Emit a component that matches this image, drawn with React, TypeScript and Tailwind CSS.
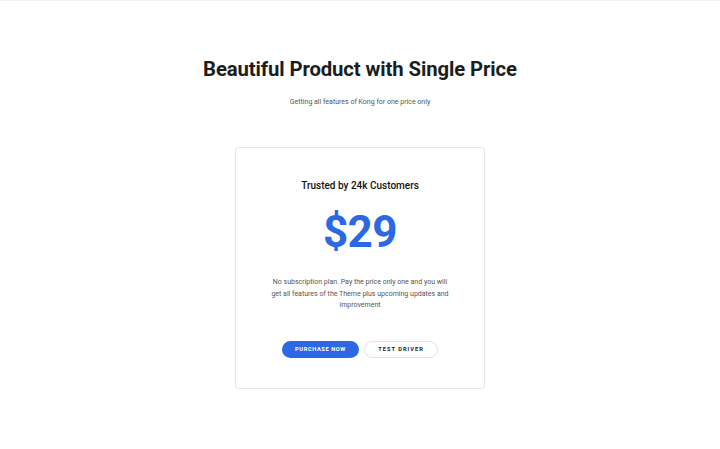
export default function App() {
  return (
    <div className="min-h-[449px] w-full bg-white font-['Roboto',sans-serif] text-[#222] border-t border-[#f2f2f2]">
      <div className="flex flex-col items-center pt-[54px]">
        <h1 className="text-[20.3px] leading-[28px] font-bold text-[#1d1d1d] tracking-[-0.1px]">
          Beautiful Product with Single Price
        </h1>
        <p className="mt-[14px] text-[7px] leading-[10px] text-[#555]">
          Getting all features of Kong for one price only
        </p>
        <div className="mt-[40px] w-[250px] h-[242px] border border-[#e6e6e6] rounded-[3px] flex flex-col items-center pt-[31px]">
          <div className="text-[10px] leading-[14px] font-medium text-[#111]">
            Trusted by 24k Customers
          </div>
          <div className="mt-[16px] text-[44px] leading-[46px] font-bold text-[#2c68e6] tracking-[-0.5px]">
            $29
          </div>
          <p className="mt-[22px] w-[184px] text-center text-[7px] leading-[11.5px] text-[#555]">
            No subscription plan. Pay the price only one and you will get all features of the Theme plus upcoming updates and improvement
          </p>
          <div className="mt-[29px] flex gap-[5px]">
            <button className="w-[77px] h-[17px] rounded-full bg-[#2c68e6] text-white text-[5.7px] font-bold tracking-[0.6px] uppercase">
              Purchase Now
            </button>
            <button className="w-[74px] h-[17px] rounded-full border border-[#e3e3e3] bg-white text-[#222] text-[5.7px] font-bold tracking-[1px] uppercase">
              Test Driver
            </button>
          </div>
        </div>
      </div>
    </div>
  );
}
